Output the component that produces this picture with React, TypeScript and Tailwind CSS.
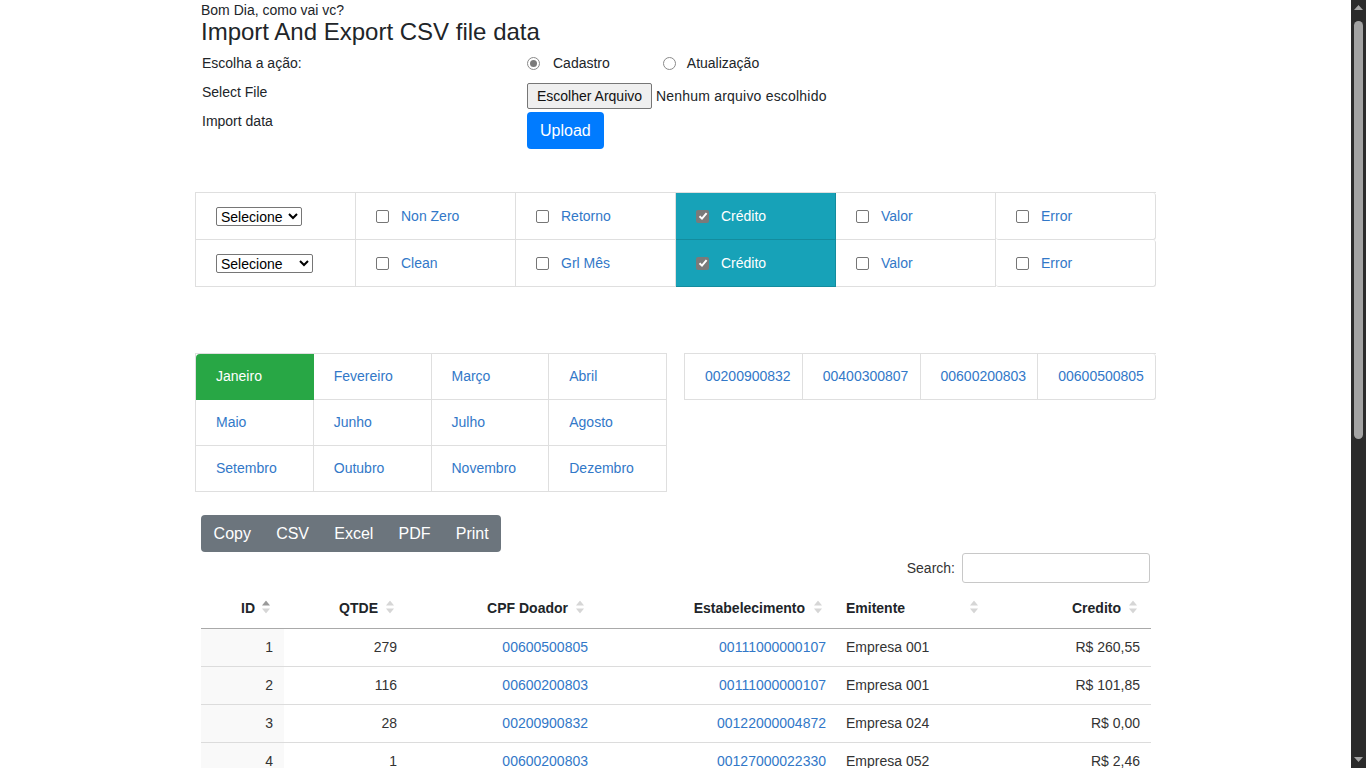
import React from "react";

const LINK = "text-[#3278c8]";

function SortIcon({ active }: { active?: boolean }) {
  return (
    <svg width="8" height="13" viewBox="0 0 8 13" className="absolute right-[14px] top-1/2 -translate-y-[58%]">
      <polygon points="0,5 4,0 8,5" fill={active ? "#9a9a9a" : "#d6d6d6"} />
      <polygon points="0,8 4,13 8,8" fill="#d6d6d6" />
    </svg>
  );
}

function Check({ checked }: { checked?: boolean }) {
  if (checked) {
    return (
      <span className="flex size-[13px] shrink-0 items-center justify-center rounded-[2px] bg-[#7a7a7a]">
        <svg width="10" height="10" viewBox="0 0 10 10">
          <path d="M1.5 5.2 L4 7.6 L8.6 2.2" stroke="#fff" strokeWidth="2" fill="none" />
        </svg>
      </span>
    );
  }
  return <span className="size-[13px] shrink-0 rounded-[2px] border border-[#767676] bg-white" />;
}

function Radio({ checked }: { checked?: boolean }) {
  return (
    <span className="flex size-[13px] items-center justify-center rounded-full border border-[#8a8a8a] bg-white">
      {checked && <span className="size-[7px] rounded-full bg-[#7a7a7a]" />}
    </span>
  );
}

// page scrollbar as it shows in the screenshot
function Scrollbar() {
  return (
    <div className="fixed right-0 top-0 flex h-screen w-[15px] flex-col items-center bg-[#2b2b2b]">
      <svg width="9" height="6" viewBox="0 0 9 6" className="mt-[5px]">
        <polygon points="0,5 4.5,0 9,5" fill="#a3a3a3" />
      </svg>
      <div className="mt-[10px] h-[418px] w-[9px] rounded-full bg-[#a3a3a3]" />
      <svg width="9" height="6" viewBox="0 0 9 6" className="mb-[5px] mt-auto">
        <polygon points="0,0 4.5,5 9,0" fill="#a3a3a3" />
      </svg>
    </div>
  );
}

const filters = [
  ["Non Zero", "Retorno", "Crédito", "Valor", "Error"],
  ["Clean", "Grl Mês", "Crédito", "Valor", "Error"],
];

const months = [
  "Janeiro", "Fevereiro", "Março", "Abril",
  "Maio", "Junho", "Julho", "Agosto",
  "Setembro", "Outubro", "Novembro", "Dezembro",
];

const cpfs = ["00200900832", "00400300807", "00600200803", "00600500805"];

const rows = [
  [1, 279, "00600500805", "00111000000107", "Empresa 001", "R$ 260,55"],
  [2, 116, "00600200803", "00111000000107", "Empresa 001", "R$ 101,85"],
  [3, 28, "00200900832", "00122000004872", "Empresa 024", "R$ 0,00"],
  [4, 1, "00600200803", "00127000022330", "Empresa 052", "R$ 2,46"],
  [5, 14, "00400300807", "00131000001559", "Empresa 063", "R$ 18,20"],
  [6, 7, "00600500805", "00135000009914", "Empresa 070", "R$ 9,74"],
  [7, 52, "00200900832", "00140000003321", "Empresa 081", "R$ 48,10"],
  [8, 3, "00600200803", "00146000012208", "Empresa 093", "R$ 1,32"],
  [9, 19, "00400300807", "00151000007765", "Empresa 104", "R$ 22,05"],
  [10, 66, "00600500805", "00158000004410", "Empresa 117", "R$ 71,90"],
];

export default function App() {
  return (
    <div className="min-h-screen bg-white pb-[40px] pr-[15px] font-['Liberation_Sans',Arial,sans-serif] text-[14px] text-[#212529]">
      <div className="mx-auto w-[961px]">
        <div className="px-[6px] pt-[2px]">
          <p className="h-[16px] leading-[16px]">Bom Dia, como vai vc?</p>
          <h1 className="text-[24px] leading-[28px]">Import And Export CSV file data</h1>
        </div>

        <div className="mt-[3px] flex">
          <div className="flex w-[332px] flex-col px-[7px]">
            <div className="flex h-[29px] items-center">Escolha a ação:</div>
            <div className="flex h-[29px] items-center">Select File</div>
            <div className="flex h-[29px] items-center">Import data</div>
          </div>
          <div className="flex flex-col">
            <div className="flex h-[28px] items-center">
              <Radio checked />
              <span className="ml-[13px]">Cadastro</span>
              <span className="ml-[53px]"><Radio /></span>
              <span className="ml-[11px]">Atualização</span>
            </div>
            <div className="mt-[6px] flex items-center">
              <span className="flex h-[26px] items-center rounded-[2px] border border-[#767676] bg-[#efefef] px-[9px] text-[#111]">
                Escolher Arquivo
              </span>
              <span className="ml-[4px] tracking-[0.2px]">Nenhum arquivo escolhido</span>
            </div>
            <div className="mt-[3px]">
              <button className="h-[37px] rounded-[4px] bg-[#007bff] px-[13px] text-[16px] text-white">Upload</button>
            </div>
          </div>
        </div>

        <div className="mt-[43px] grid grid-cols-6 border-l border-t border-[#dfdfdf]">
          {filters.map((row, r) => (
            <React.Fragment key={r}>
              <div className="flex h-[47px] items-center border-b border-r border-[#dfdfdf] px-[20px]">
                <select
                  className={`h-[19px] rounded-[2px] border border-[#767676] bg-white text-[14px] text-black ${r === 0 ? "w-[86px]" : "w-[97px]"}`}
                >
                  <option>Selecione</option>
                </select>
              </div>
              {row.map((label, i) => {
                const on = label === "Crédito";
                return (
                  <div
                    key={i}
                    className={`flex h-[47px] items-center gap-[12px] border-b border-r px-[20px] ${
                      on ? "border-[#138c9e] bg-[#17a2b8] text-white" : `border-[#dfdfdf] bg-white ${LINK}`
                    } ${i === 4 ? "rounded-[3px]" : ""}`}
                  >
                    <Check checked={on} />
                    <span>{label}</span>
                  </div>
                );
              })}
            </React.Fragment>
          ))}
        </div>

        <div className="mt-[66px] flex gap-[17px]">
          <div className="grid w-[472px] grid-cols-4 border-l border-t border-[#dfdfdf]">
            {months.map((m, i) => (
              <div
                key={m}
                className={`flex h-[46px] items-center border-b border-r px-[20px] ${
                  i === 0 ? "rounded-tl-[4px] border-[#28a745] bg-[#28a745] text-white" : `border-[#dfdfdf] ${LINK}`
                }`}
              >
                {m}
              </div>
            ))}
          </div>
          <div className="grid h-[47px] w-[472px] grid-cols-4 border-l border-t border-[#dfdfdf]">
            {cpfs.map((c, i) => (
              <div
                key={c}
                className={`flex items-center border-b border-r border-[#dfdfdf] px-[20px] ${LINK} ${i === 3 ? "rounded-r-[3px]" : ""}`}
              >
                {c}
              </div>
            ))}
          </div>
        </div>

        <div className="mt-[23px] px-[6px]">
          <div className="flex h-[37px] w-max overflow-hidden rounded-[4px] bg-[#6c757d] text-[16px] text-white">
            {["Copy", "CSV", "Excel", "PDF", "Print"].map((b) => (
              <button key={b} className="px-[12.6px]">{b}</button>
            ))}
          </div>

          <div className="mt-[1px] flex items-center justify-end">
            <label className="text-[#333]">Search:</label>
            <input className="ml-[7px] h-[30px] w-[188px] rounded-[3px] border border-[#c8c8c8] bg-white" />
          </div>

          <table className="mt-[6px] w-[950px] table-fixed border-collapse text-[#333]">
            <colgroup>
              <col className="w-[83px]" />
              <col className="w-[124px]" />
              <col className="w-[190px]" />
              <col className="w-[238px]" />
              <col className="w-[156px]" />
              <col className="w-[159px]" />
            </colgroup>
            <thead>
              <tr className="border-b border-[#a9a9a9] font-bold text-[#212529]">
                <th className="relative h-[39px] pr-[29px] text-right">ID<SortIcon active /></th>
                <th className="relative pr-[30px] text-right">QTDE<SortIcon /></th>
                <th className="relative pr-[30px] text-right">CPF Doador<SortIcon /></th>
                <th className="relative pr-[31px] text-right">Estabelecimento<SortIcon /></th>
                <th className="relative pl-[10px] text-left">Emitente<SortIcon /></th>
                <th className="relative pr-[30px] text-right">Credito<SortIcon /></th>
              </tr>
            </thead>
            <tbody>
              {rows.map((r) => (
                <tr key={r[0]} className="h-[38px] border-b border-[#dcdcdc]">
                  <td className="bg-[#f9f9f9] pr-[11px] text-right">{r[0]}</td>
                  <td className="pr-[11px] text-right">{r[1]}</td>
                  <td className={`pr-[10px] text-right ${LINK}`}>{r[2]}</td>
                  <td className={`pr-[10px] text-right ${LINK}`}>{r[3]}</td>
                  <td className="pl-[10px]">{r[4]}</td>
                  <td className="pr-[11px] text-right">{r[5]}</td>
                </tr>
              ))}
            </tbody>
          </table>

          <div className="mt-[10px] flex items-center justify-between text-[#333]">
            <span>Showing 1 to 10 of 57 entries</span>
            <div className="flex">
              {["Previous", "1", "2", "3", "4", "5", "6", "Next"].map((p) => (
                <span
                  key={p}
                  className={`px-[12px] py-[6px] ${p === "1" ? "rounded-[3px] border border-[#cacaca] bg-[#f0f0f0]" : "text-[#666]"}`}
                >
                  {p}
                </span>
              ))}
            </div>
          </div>
        </div>
      </div>
      <Scrollbar />
    </div>
  );
}
